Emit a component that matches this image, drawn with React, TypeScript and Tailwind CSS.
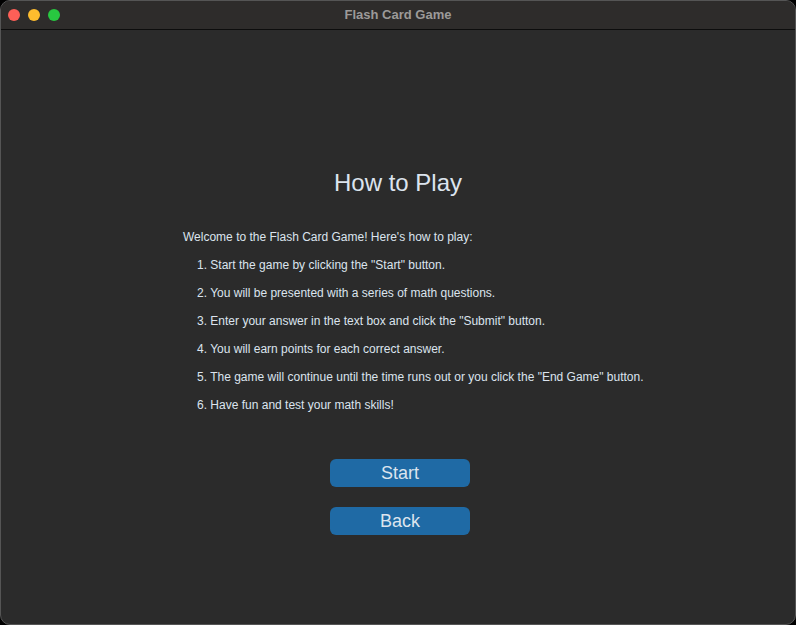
const steps = [
  'Start the game by clicking the "Start" button.',
  'You will be presented with a series of math questions.',
  'Enter your answer in the text box and click the "Submit" button.',
  'You will earn points for each correct answer.',
  'The game will continue until the time runs out or you click the "End Game" button.',
  'Have fun and test your math skills!',
]

export default function App() {
  return (
    <div className="w-[796px] h-[625px] bg-black font-['Liberation_Sans',Arial,sans-serif]">
      <div className="w-full h-full rounded-[10px] border border-[#555555] bg-[#2b2b2b] overflow-hidden flex flex-col">
        {/* Title bar */}
        <div className="relative h-[29px] shrink-0 bg-[#2e2c2b] border-b border-[#0d0d0d] flex items-center justify-center">
          <div className="absolute left-[7px] top-[8px] flex gap-[8px]">
            <span className="w-[12px] h-[12px] rounded-full bg-[#fe5f57]" />
            <span className="w-[12px] h-[12px] rounded-full bg-[#febc2e]" />
            <span className="w-[12px] h-[12px] rounded-full bg-[#28c840]" />
          </div>
          <span className="text-[13px] font-bold text-[#9c9a99]">Flash Card Game</span>
        </div>

        {/* Content */}
        <div className="flex-1 flex flex-col">
          <h1 className="mt-[139px] text-center text-[24px] leading-[28px] text-[#dce4ee]">
            How to Play
          </h1>
          <div className="mt-[26px] pl-[182px] text-[12px] leading-[28px] text-[#dce4ee]">
            <p>Welcome to the Flash Card Game! Here's how to play:</p>
            <ol className="pl-[14px]">
              {steps.map((s, i) => (
                <li key={i}>
                  {i + 1}. {s}
                </li>
              ))}
            </ol>
          </div>
          <div className="mt-[40px] flex flex-col items-center gap-[20px] pl-[4px]">
            <button className="w-[140px] h-[28px] rounded-[6px] bg-[#1f6aa5] text-[18px] text-[#dce4ee] leading-none">
              Start
            </button>
            <button className="w-[140px] h-[28px] rounded-[6px] bg-[#1f6aa5] text-[18px] text-[#dce4ee] leading-none">
              Back
            </button>
          </div>
        </div>
      </div>
    </div>
  )
}
